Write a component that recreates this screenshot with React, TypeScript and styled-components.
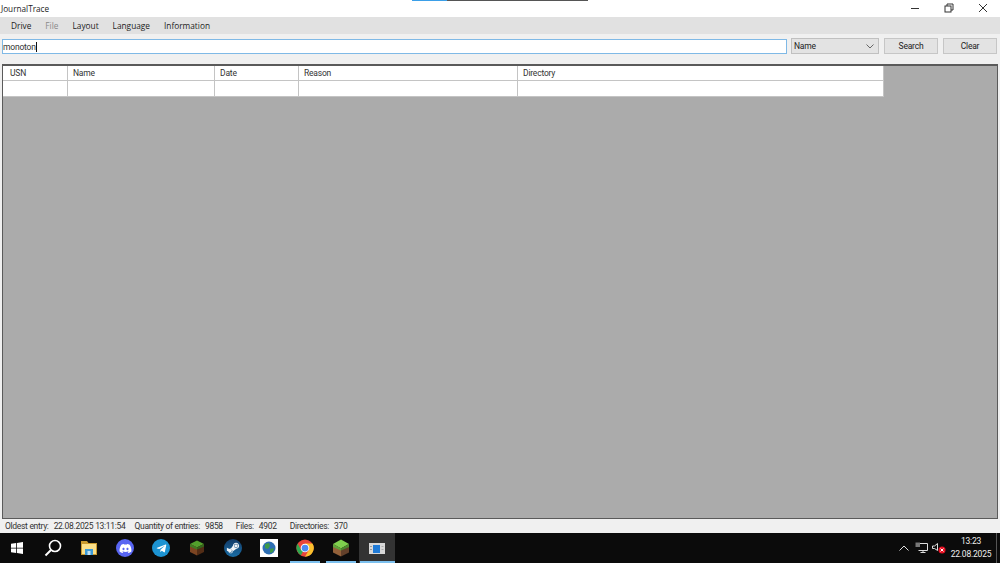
import React from "react";
import styled, { createGlobalStyle } from "styled-components";
import { FaDiscord, FaTelegramPlane, FaSteamSymbol } from "react-icons/fa";

const Global = createGlobalStyle`
  html, body { margin: 0; padding: 0; background: #f0f0f0; overflow: hidden; }
  #root { width: 1000px; height: 563px; }
`;

const uiFont = `"Roboto", "Liberation Sans", sans-serif`;

const Screen = styled.div`
  position: relative;
  width: 1000px;
  height: 563px;
  display: flex;
  flex-direction: column;
  overflow: hidden;
  font-family: "Open Sans", "Liberation Sans", sans-serif;
  color: #222;
`;

const CaptureStrip = styled.div`
  position: absolute;
  left: 412px;
  top: 0;
  width: 176px;
  height: 1px;
  background: linear-gradient(to right, #3b9fe8 0 35px, #555 35px 100%);
`;

const TitleBar = styled.div`
  height: 17px;
  background: #fff;
  display: flex;
  align-items: center;
  justify-content: space-between;
  padding-left: 1px;
`;

const Title = styled.span`
  font-size: 8.2px;
  color: #222;
`;

const WindowControls = styled.div`
  display: flex;
  height: 17px;
`;

const ControlButton = styled.div`
  width: 34px;
  display: flex;
  align-items: center;
  justify-content: center;
  margin-top: -1px;
`;

const MenuBar = styled.div`
  height: 17px;
  background: #e1e1e1;
  display: flex;
  align-items: center;
  padding-left: 4px;
`;

const MenuItem = styled.span<{ $disabled?: boolean }>`
  font-size: 8.3px;
  padding: 0 7px;
  color: ${(p) => (p.$disabled ? "#8a8a8a" : "#222")};
`;

const SearchRow = styled.div`
  height: 30px;
  background: #f0f0f0;
  display: flex;
  align-items: flex-start;
  padding: 4px 3px 0 2px;
  box-sizing: border-box;
`;

const SearchBox = styled.div`
  width: 785px;
  height: 15px;
  margin-top: 1px;
  box-sizing: border-box;
  border: 1px solid #7fb9e6;
  background: #fff;
  font-family: ${uiFont};
  font-size: 8.5px;
  letter-spacing: -0.2px;
  display: flex;
  align-items: center;
  color: #333;
`;

const Caret = styled.span`
  display: inline-block;
  width: 1px;
  height: 10px;
  background: #111;
`;

const SelectBox = styled.div`
  width: 88px;
  height: 16px;
  margin-left: 4px;
  box-sizing: border-box;
  border: 1px solid #c0c0c0;
  background: #e3e3e3;
  font-family: ${uiFont};
  font-size: 8.5px;
  letter-spacing: -0.2px;
  display: flex;
  align-items: center;
  justify-content: space-between;
  padding: 0 4px 0 2px;
`;

const ActionButton = styled.div<{ $width: number; $gap: number }>`
  width: ${(p) => p.$width}px;
  height: 16px;
  margin-left: ${(p) => p.$gap}px;
  box-sizing: border-box;
  border: 1px solid #c6c6c6;
  background: #e3e3e3;
  font-family: ${uiFont};
  font-size: 8.5px;
  letter-spacing: -0.2px;
  display: flex;
  align-items: center;
  justify-content: center;
`;

const GridArea = styled.div`
  flex: 1;
  margin: 0 2px;
  box-sizing: border-box;
  border: 1px solid #5a5a5a;
  border-top-width: 2px;
  background: #ababab;
`;

const Table = styled.div`
  width: 881px;
  display: grid;
  grid-template-columns: 65px 147px 84px 219px 366px;
  grid-auto-rows: 15px 16px;
  background: #fff;
  font-family: ${uiFont};
  font-size: 8.5px;
  letter-spacing: -0.2px;
`;

const Cell = styled.div<{ $first?: boolean }>`
  box-sizing: border-box;
  border-right: 1px solid #c4c4c4;
  border-bottom: 1px solid #c4c4c4;
  display: flex;
  align-items: center;
  padding-left: ${(p) => (p.$first ? 7 : 5)}px;
  color: #333;
`;

const StatusBar = styled.div`
  height: 14px;
  background: #f0f0f0;
  display: flex;
  align-items: center;
  padding-left: 5px;
  font-family: ${uiFont};
  font-size: 8.5px;
  letter-spacing: -0.3px;
  color: #333;
`;

const StatusLabel = styled.span<{ $gap?: number }>`
  margin-left: ${(p) => p.$gap ?? 0}px;
`;

const StatusValue = styled.span`
  margin-left: 5px;
`;

const Taskbar = styled.div`
  height: 30px;
  background: #0b0b0b;
  display: flex;
  align-items: stretch;
`;

const TaskItem = styled.div<{ $active?: boolean; $running?: boolean }>`
  position: relative;
  width: 36px;
  flex: none;
  display: flex;
  align-items: center;
  justify-content: center;
  background: ${(p) => (p.$active ? "#333" : "transparent")};
  &:first-child {
    margin-left: -1px;
  }
  &::after {
    content: "";
    display: ${(p) => (p.$running || p.$active ? "block" : "none")};
    position: absolute;
    left: ${(p) => (p.$active ? 1 : 3)}px;
    right: ${(p) => (p.$active ? 0 : 3)}px;
    bottom: 0;
    height: 2px;
    background: #7cc0ee;
  }
`;

const Tray = styled.div`
  margin-left: auto;
  display: flex;
  align-items: center;
  color: #fff;
`;

const TrayIcon = styled.div<{ $width: number }>`
  width: ${(p) => p.$width}px;
  display: flex;
  justify-content: center;
  align-items: center;
`;

const Clock = styled.div`
  width: 46px;
  text-align: center;
  font-family: ${uiFont};
  font-size: 8.5px;
  letter-spacing: -0.2px;
  line-height: 13px;
  color: #eee;
`;

const ShowDesktop = styled.div`
  width: 3px;
  align-self: stretch;
  margin-left: 2px;
  border-left: 1px solid #555;
`;

const Round = styled.div<{ $bg: string }>`
  width: 18px;
  height: 18px;
  border-radius: 50%;
  background: ${(p) => p.$bg};
  display: flex;
  align-items: center;
  justify-content: center;
`;

const WhiteTile = styled.div`
  width: 18px;
  height: 18px;
  background: #fff;
  display: flex;
  align-items: center;
  justify-content: center;
`;

const Block = () => (
  <svg width="18" height="18" viewBox="0 0 18 18">
    <path d="M9 0.5 L17 5 L9 9.5 L1 5 Z" fill="#7fd04e" />
    <path d="M1 5 L9 9.5 V17.5 L1 13.5 Z" fill="#93613a" />
    <path d="M17 5 L9 9.5 V17.5 L17 13.5 Z" fill="#63402a" />
    <path d="M1 5 L9 9.5 V11.5 L5 9.8 L1 8 Z" fill="#5da53a" />
    <path d="M17 5 L9 9.5 V11.5 L13 9.8 L17 8 Z" fill="#4a8a2e" />
  </svg>
);

const DarkBlock = () => (
  <svg width="18" height="18" viewBox="0 0 18 18">
    <path d="M9 1.5 L16 5 L9 8.5 L2 5 Z" fill="#52a02c" />
    <path d="M2 5 L9 8.5 V16.5 L2 13 Z" fill="#7c4522" />
    <path d="M16 5 L9 8.5 V16.5 L16 13 Z" fill="#532d16" />
    <path d="M2 5 L9 8.5 V10.5 L2 7.5 Z" fill="#3f7d22" />
    <path d="M16 5 L9 8.5 V10.5 L16 7.5 Z" fill="#33661c" />
  </svg>
);

const Chrome = () => (
  <svg width="18" height="18" viewBox="0 0 48 48">
    <circle cx="24" cy="24" r="23" fill="#e8453c" />
    <path d="M24 24 L13 43 A23 23 0 0 1 4 12 L14 30 Z" fill="#2fa84f" />
    <path d="M24 12 H44 A23 23 0 0 1 24 47 L34 30 Z" fill="#fbc02d" />
    <circle cx="24" cy="24" r="11.5" fill="#fff" />
    <circle cx="24" cy="24" r="9" fill="#4a8af4" />
  </svg>
);

const Folder = () => (
  <svg width="16" height="14" viewBox="0 0 16 14">
    <path d="M0 0 H6 L7.5 2 H16 V14 H0 Z" fill="#c99a2e" />
    <rect x="1" y="3" width="14" height="10" fill="#fbe08a" />
    <rect x="4" y="8" width="8" height="6" fill="#3c9ad8" />
    <rect x="6.5" y="10" width="3" height="4" fill="#bfe0f2" />
  </svg>
);

const tasks: React.ReactNode[] = [
  <svg key="w" width="12" height="12" viewBox="0 0 12 12" fill="#fff">
    <path d="M0 1.7 L5.2 1 V5.7 H0 Z M6 .9 L12 0 V5.7 H6 Z M0 6.4 H5.2 V11 L0 10.3 Z M6 6.4 H12 V12 L6 11.1 Z" />
  </svg>,
  <svg key="s" width="18" height="18" viewBox="0 0 18 18" fill="none" stroke="#fff" strokeWidth="1.6">
    <circle cx="11" cy="7" r="5.5" />
    <path d="M7 11 L1.5 16.5" strokeWidth="2" />
  </svg>,
  <Folder key="f" />,
  <Round key="d" $bg="#5865f2"><FaDiscord size={13} color="#fff" /></Round>,
  <Round key="t" $bg="#1c93d2"><FaTelegramPlane size={11} color="#fff" /></Round>,
  <DarkBlock key="mc" />,
  <Round key="st" $bg="linear-gradient(#123a66, #1a6ea6)"><FaSteamSymbol size={14} color="#f2f5f8" /></Round>,
  <WhiteTile key="g">
    <svg width="14" height="14" viewBox="0 0 14 14">
      <circle cx="7" cy="7" r="6.5" fill="#2e6fb4" />
      <path d="M3 3 L7 2 L8 5 L6 8 L3 7 Z M8 8 L12 7 L11 11 L8 12 Z" fill="#3e9a4a" />
    </svg>
  </WhiteTile>,
  <Chrome key="c" />,
  <Block key="b" />,
  <svg key="a" width="16" height="11" viewBox="0 0 16 11">
    <rect width="16" height="11" fill="#d8d8d8" />
    <rect x="4" y="2" width="7" height="8" fill="#1f7ad6" />
    <rect x="1" y="3" width="2" height="1" fill="#999" />
    <rect x="1" y="6" width="2" height="1" fill="#999" />
    <rect x="12.5" y="3" width="2" height="1" fill="#aaa" />
    <rect x="12.5" y="6" width="2" height="1" fill="#aaa" />
  </svg>,
];

const columns = ["USN", "Name", "Date", "Reason", "Directory"];

export default function App() {
  return (
    <Screen>
      <Global />
      <CaptureStrip />
      <TitleBar>
        <Title>JournalTrace</Title>
        <WindowControls>
          <ControlButton>
            <svg width="10" height="10" viewBox="0 0 10 10"><path d="M1 5.5 H9" stroke="#333" strokeWidth="1" /></svg>
          </ControlButton>
          <ControlButton>
            <svg width="10" height="10" viewBox="0 0 10 10" fill="none" stroke="#333" strokeWidth="1">
              <rect x="1" y="3" width="6" height="6" />
              <path d="M3 3 V1 H9 V7 H7" />
            </svg>
          </ControlButton>
          <ControlButton>
            <svg width="10" height="10" viewBox="0 0 10 10"><path d="M1 1 L9 9 M9 1 L1 9" stroke="#333" strokeWidth="1" /></svg>
          </ControlButton>
        </WindowControls>
      </TitleBar>
      <MenuBar>
        <MenuItem>Drive</MenuItem>
        <MenuItem $disabled>File</MenuItem>
        <MenuItem>Layout</MenuItem>
        <MenuItem>Language</MenuItem>
        <MenuItem>Information</MenuItem>
      </MenuBar>
      <SearchRow>
        <SearchBox>monoton<Caret /></SearchBox>
        <SelectBox>
          Name
          <svg width="8" height="5" viewBox="0 0 8 5" fill="none" stroke="#666"><path d="M.5 .5 L4 4 L7.5 .5" /></svg>
        </SelectBox>
        <ActionButton $width={54} $gap={5}>Search</ActionButton>
        <ActionButton $width={54} $gap={5}>Clear</ActionButton>
      </SearchRow>
      <GridArea>
        <Table>
          {columns.map((c, i) => <Cell key={c} $first={i === 0}>{c}</Cell>)}
          {columns.map((c) => <Cell key={c + "-row"} />)}
        </Table>
      </GridArea>
      <StatusBar>
        <StatusLabel>Oldest entry:</StatusLabel>
        <StatusValue>22.08.2025 13:11:54</StatusValue>
        <StatusLabel $gap={9}>Quantity of entries:</StatusLabel>
        <StatusValue>9858</StatusValue>
        <StatusLabel $gap={13}>Files:</StatusLabel>
        <StatusValue>4902</StatusValue>
        <StatusLabel $gap={13}>Directories:</StatusLabel>
        <StatusValue>370</StatusValue>
      </StatusBar>
      <Taskbar>
        {tasks.map((t, i) => (
          <TaskItem key={i} $running={i === 8 || i === 9} $active={i === 10}>{t}</TaskItem>
        ))}
        <Tray>
          <TrayIcon $width={16}>
            <svg width="10" height="6" viewBox="0 0 10 6" fill="none" stroke="#ddd"><path d="M.5 5.5 L5 1 L9.5 5.5" /></svg>
          </TrayIcon>
          <TrayIcon $width={18}>
            <svg width="13" height="12" viewBox="0 0 13 12" fill="none" stroke="#ddd">
              <path d="M3.5 1.5 H12.5 V8.5 H3.5 M8 8.5 V10.5 M5.5 10.5 H10.5" />
              <path d="M.5 .5 H5 V5 H.5 Z" fill="#777" stroke="none" />
            </svg>
          </TrayIcon>
          <TrayIcon $width={18}>
            <svg width="14" height="12" viewBox="0 0 14 12">
              <path d="M.5 4 H2.5 L5.5 1.5 V8.5 L2.5 6.5 H.5 Z" fill="none" stroke="#ddd" />
              <circle cx="10" cy="8" r="3.5" fill="#e81123" />
              <path d="M8.5 6.5 L11.5 9.5 M11.5 6.5 L8.5 9.5" stroke="#fff" />
            </svg>
          </TrayIcon>
          <Clock>13:23<br />22.08.2025</Clock>
          <ShowDesktop />
        </Tray>
      </Taskbar>
    </Screen>
  );
}
